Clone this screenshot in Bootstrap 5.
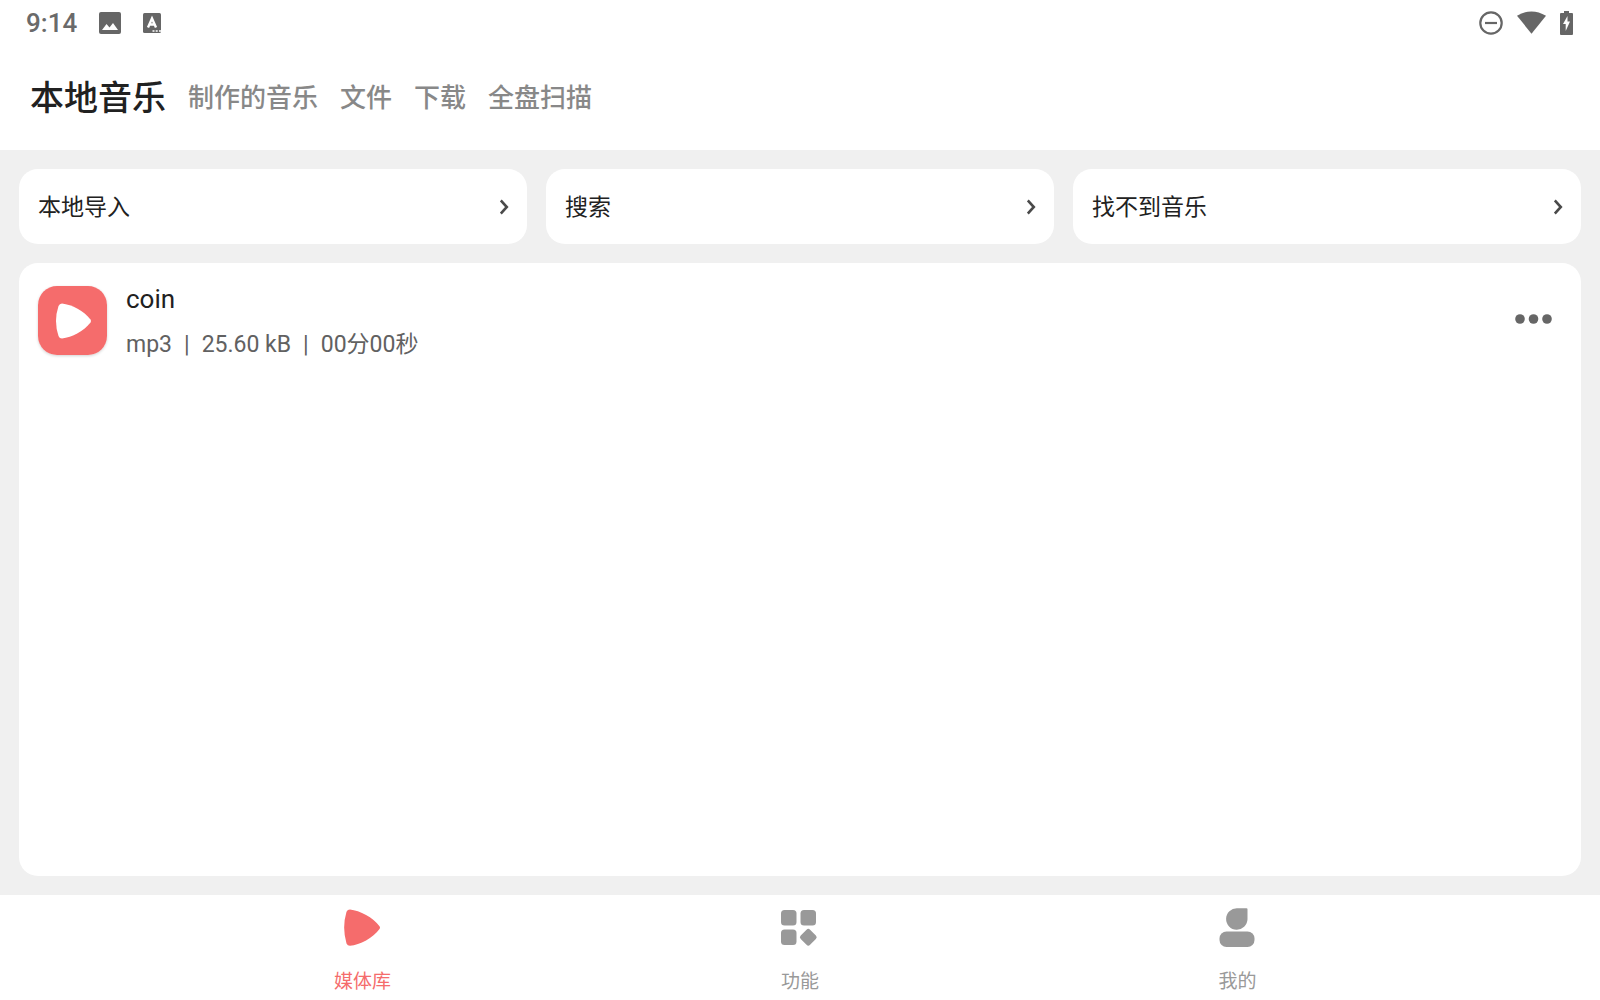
<!DOCTYPE html>
<html lang="zh-CN">
<head>
<meta charset="utf-8">
<meta name="viewport" content="width=device-width, initial-scale=1">
<title>本地音乐</title>
<link rel="stylesheet" href="https://cdn.jsdelivr.net/npm/bootstrap@5.3.0/dist/css/bootstrap.min.css">
<style>
  body { font-family: Roboto, "Noto Sans CJK SC", sans-serif; background: #f0f0f0; color: #212121; }
  svg { display: block; flex: none; }
  .status-bar { height: 45px; padding: 0 27px 0 26px; color: #6a6a6a; font-size: 26px; line-height: 45px; font-weight: 500; }
  .status-bar .clock { padding-top: 2px; }
  .notices { gap: 22px; }
  .indicators { gap: 14px; }
  .tab-bar { height: 105px; padding: 0 30px; gap: 22px; }
  .tab-link { font-size: 26px; line-height: 50px; font-weight: 500; color: #888; text-decoration: none; }
  .tab-link.active { font-size: 34px; color: #212121; }
  .content { padding: 19px; gap: 19px; }
  .actions { gap: 19px; }
  .action-tile { flex: 1 1 0; height: 75px; padding: 0 18px 0 19px; border: 0; border-radius: 19px; background: #fff; color: #212121; font-size: 23px; }
  .action-tile span { padding-top: 3px; }
  .panel { border-radius: 19px; background: #fff; }
  .track { padding: 16px 19px; gap: 19px; }
  .cover { border-radius: 19px; box-shadow: 0 1px 3px rgba(0,0,0,.18); }
  .track-name { font-size: 26px; line-height: 40px; }
  .track-meta { margin-top: 10px; font-size: 23px; line-height: 32px; gap: 12px; color: #616161; }
  .more-btn { padding: 10px; border: 0; background: none; color: #666; }
  .bottom-nav { height: 105px; background: #fff; }
  .nav-tab { width: 150px; padding-top: 12px; gap: 19px; font-size: 19px; line-height: 28px; color: #999; text-decoration: none; }
  .nav-tab.active { color: #f56c6c; }
</style>
</head>
<body class="d-flex flex-column min-vh-100">
<header class="bg-white">
  <div class="status-bar d-flex align-items-center justify-content-between">
    <div class="notices d-flex align-items-center">
      <span class="clock">9:14</span>
      <svg width="22" height="22" viewBox="0 0 22 22"><rect x="0" y="0" width="22" height="22" rx="2" fill="#666"/><path d="M3 18l4.500-6 3 3.500 3.500-4.500 5 7z" fill="#fff"/></svg>
      <svg width="18" height="20" viewBox="0 0 18 20"><rect width="18" height="20" rx="1.500" fill="#666"/><path d="M5 14.500l4-9 4 9M6.500 11.500h5" fill="none" stroke="#fff" stroke-width="2.400"/><path d="M9.500 18h2M12.700 18h2M16 18h2" stroke="#fff" stroke-width="1.500"/></svg>
    </div>
    <div class="indicators d-flex align-items-center">
      <svg width="24" height="24" viewBox="0 0 24 24" fill="none" stroke="#666" stroke-width="2.200"><circle cx="12" cy="12" r="10.700"/><path d="M6 12h12"/></svg>
      <svg width="29" height="24" viewBox="0 0 30 24"><path d="M0 4.500Q15-4.500 30 4.500L15 23z" fill="#666"/></svg>
      <svg width="13" height="24" viewBox="0 0 13 24"><path d="M4 0h5v2h3q1 0 1 1v20q0 1-1 1H1q-1 0-1-1V3q0-1 1-1h3z" fill="#666"/><path d="M7.500 5L3 13h2.700v7L10 10.500H7.500z" fill="#fff"/></svg>
    </div>
  </div>
  <nav class="tab-bar d-flex align-items-center" aria-label="音乐来源">
    <a class="tab-link active" href="#" aria-current="page">本地音乐</a>
    <a class="tab-link" href="#">制作的音乐</a>
    <a class="tab-link" href="#">文件</a>
    <a class="tab-link" href="#">下载</a>
    <a class="tab-link" href="#">全盘扫描</a>
  </nav>
</header>
<main class="content d-flex flex-column flex-grow-1">
  <div class="actions d-flex">
    <button type="button" class="action-tile d-flex align-items-center justify-content-between"><span>本地导入</span><svg width="9" height="16" viewBox="0 0 9 16" fill="none" stroke="#4a4a4a" stroke-width="2.600"><path d="M.8 1.500L6.800 8 .8 14.500"/></svg></button>
    <button type="button" class="action-tile d-flex align-items-center justify-content-between"><span>搜索</span><svg width="9" height="16" viewBox="0 0 9 16" fill="none" stroke="#4a4a4a" stroke-width="2.600"><path d="M.8 1.500L6.800 8 .8 14.500"/></svg></button>
    <button type="button" class="action-tile d-flex align-items-center justify-content-between"><span>找不到音乐</span><svg width="9" height="16" viewBox="0 0 9 16" fill="none" stroke="#4a4a4a" stroke-width="2.600"><path d="M.8 1.500L6.800 8 .8 14.500"/></svg></button>
  </div>
  <section class="panel flex-grow-1">
    <div class="track d-flex align-items-center">
      <svg class="cover" width="69" height="69" viewBox="0 0 69 69"><rect width="69" height="69" fill="#f56c6c"/><path d="M24 17.500C34 18.500 46 25 52.500 33.500Q53.500 35 52.500 36.500C46 45 34 51.500 24 52.500Q21.500 52.500 20.500 50Q15.500 35 20.500 20Q21.500 17.500 24 17.500z" fill="#fff"/></svg>
      <div class="flex-grow-1">
        <div class="track-name">coin</div>
        <div class="track-meta d-flex"><span>mp3</span><span>|</span><span>25.60 kB</span><span>|</span><span>00分00秒</span></div>
      </div>
      <button type="button" class="more-btn" aria-label="更多"><svg width="38" height="12" viewBox="0 1 38 12" fill="currentColor"><circle cx="6" cy="6" r="4.800"/><circle cx="19.500" cy="6" r="4.800"/><circle cx="33" cy="6" r="4.800"/></svg></button>
    </div>
  </section>
</main>
<nav class="bottom-nav d-flex justify-content-evenly" aria-label="主导航">
  <a class="nav-tab active d-flex flex-column align-items-center" href="#" aria-current="page">
    <svg width="40" height="42" viewBox="1 0 40 42" fill="currentColor"><path d="M8 2.500C18 3.500 31 10.500 37.500 19.200Q38.500 20.500 37.500 22C31 31 18 38 8 38.700Q5.500 38.700 4.500 36.500Q-.2 20.500 4.500 4.700Q5.500 2.500 8 2.500z"/></svg>
    <span>媒体库</span>
  </a>
  <a class="nav-tab d-flex flex-column align-items-center" href="#">
    <svg width="40" height="42" viewBox="1 0 40 42" fill="currentColor"><rect x="2" y="3" width="15.500" height="15.500" rx="3.500"/><rect x="21.500" y="3" width="15.500" height="15.500" rx="3.500"/><rect x="2" y="22.500" width="15.500" height="15.500" rx="3.500"/><rect x="22.700" y="23.700" width="13.200" height="13.200" rx="2.500" transform="rotate(45 29.300 30.300)"/></svg>
    <span>功能</span>
  </a>
  <a class="nav-tab d-flex flex-column align-items-center" href="#">
    <svg width="40" height="42" viewBox="1 0 40 42" fill="currentColor"><path d="M20 1.300h9.500q1 0 1 1v10A10.700 10.700 0 1 1 20 1.300z"/><rect x="2.500" y="24.500" width="35" height="15.500" rx="7"/></svg>
    <span>我的</span>
  </a>
</nav>
<script src="https://cdn.jsdelivr.net/npm/bootstrap@5.3.0/dist/js/bootstrap.bundle.min.js"></script>
</body>
</html>
